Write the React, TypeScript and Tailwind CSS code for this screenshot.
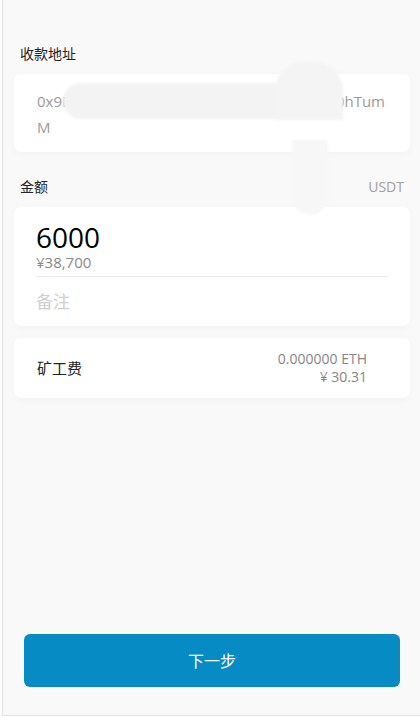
import React from 'react'

const font = { fontFamily: '"Open Sans", "Noto Sans CJK SC", sans-serif' }

export default function App() {
  return (
    <div className="pl-[2px] bg-white" style={font}>
      <div className="relative h-[716px] border-l border-b border-[#e2e2e2] bg-[#f8f9f8] pl-[11px] pr-[10px] flex flex-col">
        <div className="pt-[44px] pl-[6px] text-[14px] leading-[20px] text-[#222]">收款地址</div>
        <div className="mt-[10px] bg-white rounded-[7px] shadow-[0_2px_8px_rgba(0,0,0,0.03)] pl-[23px] pr-[25px] pt-[14px] pb-[12px] text-[15px] leading-[26px] text-[#9a9a9a]">
          <div className="flex justify-between">
            <span>0x9D</span>
            <span>0hTum</span>
          </div>
          <div>M</div>
        </div>

        <div className="mt-[25px] pl-[6px] flex items-center justify-between text-[14px] leading-[20px]">
          <span className="text-[#222]">金额</span>
          <span className="text-[#a0a0a0] pr-[6px]">USDT</span>
        </div>
        <div className="mt-[10px] bg-white rounded-[7px] shadow-[0_2px_8px_rgba(0,0,0,0.03)] px-[22px] pt-[16px] pb-[11px]">
          <div className="text-[28px] leading-[28px] text-black">6000</div>
          <div className="pt-[1px] text-[15px] leading-[20px] text-[#888]">¥38,700</div>
          <div className="mt-[4px] h-px bg-[#ececec]" />
          <div className="pt-[12px] text-[17px] leading-[26px] text-[#cfcfcf]">备注</div>
        </div>

        <div className="mt-[12px] h-[60px] bg-white rounded-[7px] shadow-[0_2px_8px_rgba(0,0,0,0.03)] pl-[23px] pr-[43px] flex items-center justify-between">
          <span className="text-[15px] text-[#222]">矿工费</span>
          <div className="text-right text-[14px] leading-[18px] text-[#858585]">
            <div>0.000000 ETH</div>
            <div>¥ 30.31</div>
          </div>
        </div>

        <div className="flex-1" />
        <div className="pl-[10px] pr-[10px] pb-[28px]">
          <button className="w-full h-[53px] rounded-[6px] bg-[#078bc4] text-white text-[16px]">下一步</button>
        </div>

        {/* redaction smudges */}
        <div className="absolute left-[60px] top-[83px] w-[230px] h-[36px] rounded-full bg-[#f3f3f3] blur-[1px]" />
        <div className="absolute left-[272px] top-[62px] w-[68px] h-[58px] rounded-t-[28px] bg-[#f4f4f4] blur-[1px]" />
        <div className="absolute left-[289px] top-[140px] w-[36px] h-[75px] rounded-b-[18px] bg-[#f7f7f7] blur-[1px]" />
      </div>
    </div>
  )
}
